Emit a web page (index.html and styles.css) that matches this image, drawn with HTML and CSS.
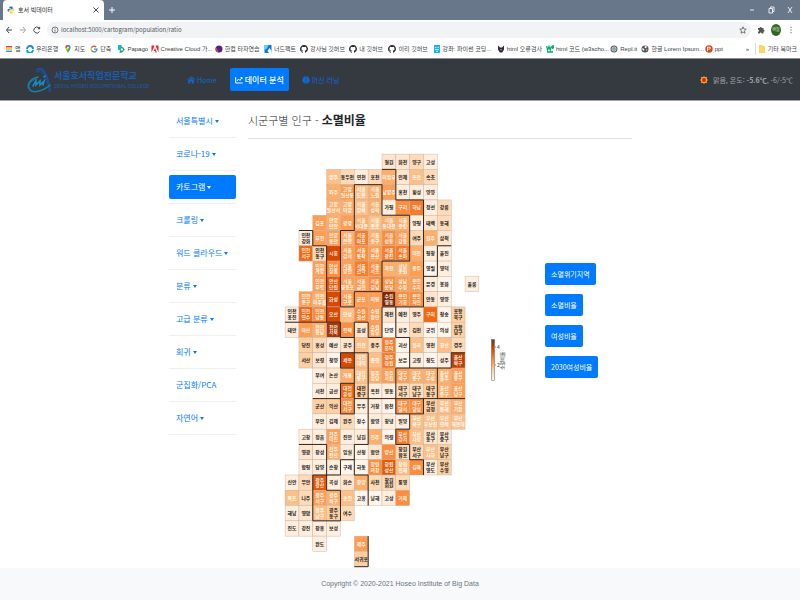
FILE: index.html
```html
<!DOCTYPE html>
<html lang="ko">
<head>
<meta charset="utf-8">
<title>호서 빅데이터</title>
<link rel="stylesheet" href="styles.css">
</head>
<body>
<svg class="defs" aria-hidden="true">
  <symbol id="github" viewBox="0 0 16 16"><path fill="#24292e" d="M8 0C3.6 0 0 3.6 0 8c0 3.5 2.3 6.5 5.5 7.6.4.1.5-.2.5-.4v-1.5c-2.2.5-2.7-.9-2.7-.9-.4-.9-.9-1.2-.9-1.2-.7-.5.1-.5.1-.5.8.1 1.200.8 1.200.8.7 1.200 1.900.9 2.300.7.1-.5.3-.9.5-1.100-1.800-.2-3.600-.9-3.600-4 0-.9.3-1.600.8-2.100-.1-.2-.4-1 .1-2.100 0 0 .7-.2 2.200.8a7.600 7.600 0 0 1 4 0c1.500-1 2.200-.8 2.200-.8.4 1.100.2 1.900.1 2.100.5.6.8 1.300.8 2.100 0 3.100-1.900 3.700-3.700 3.900.3.3.6.8.6 1.500v2.200c0 .2.1.5.6.4A8 8 0 0 0 8 0Z"/></symbol>
  <symbol id="python" viewBox="0 0 16 16"><path fill="#3776ab" d="M8 1c-3 0-3.500 1-3.500 2.500V5H8.500v1H3C1.500 6 1 7 1 8.500S2 11 3 11h1.500V9c0-1 1-2 2-2h3c1 0 2-1 2-2V3.500C11.500 2 11 1 8 1Z"/><path fill="#ffd43b" d="M8 15c3 0 3.500-1 3.500-2.500V11h-4v-1H13c1.500 0 2-1 2-2.500S14 5 13 5h-1v2c0 1-1 2-2 2H7c-1 0-2 1-2 2v1.500C5 14 5.500 15 8 15Z"/></symbol>
</svg>

<header class="browser">
  <div class="tabs">
    <div class="tab"><svg class="ico"><use href="#python"/></svg><span>호서 빅데이터</span><button class="plain close" aria-label="탭 닫기"><svg viewBox="0 0 8 8"><path d="M1.500 1.500l5 5m0-5l-5 5"/></svg></button></div>
    <button class="plain new" aria-label="새 탭"><svg viewBox="0 0 8 8"><path d="M4 1v6M1 4h6"/></svg></button>
    <div class="window">
      <button class="plain" aria-label="최소화"><svg viewBox="0 0 8 8"><path d="M2 4h4"/></svg></button>
      <button class="plain" aria-label="복원"><svg viewBox="0 0 8 8"><path d="M2 2.500h3.500v4.500H2zM3.500 2.500V1H7v4.500H5.500"/></svg></button>
      <button class="plain" aria-label="닫기"><svg viewBox="0 0 8 8"><path d="M2 1l4 6m0-6L2 7"/></svg></button>
    </div>
  </div>
  <div class="toolbar">
    <button class="plain" aria-label="뒤로"><svg viewBox="0 0 8 8"><path d="M7 4H1.500M4 1L1.500 4 4 7"/></svg></button>
    <button class="plain faded" aria-label="앞으로"><svg viewBox="0 0 8 8"><path d="M1 4h5.500M4 1l2.500 3L4 7"/></svg></button>
    <button class="plain" aria-label="새로고침"><svg viewBox="0 0 8 8"><path d="M6.500 5.500A3 3 0 1 1 6 2l.7.8M6.700.8v2H5"/></svg></button>
    <div class="omnibox">
      <svg class="line" viewBox="0 0 8 8"><circle cx="4" cy="4" r="3"/><path d="M4 3.500v2.200M4 2v.7"/></svg>
      <input aria-label="주소" value="localhost:5000/cartogram/population/ratio">
      <svg class="line" viewBox="0 0 8 8"><path d="M4 .8l.9 2.200 2.300.2-1.700 1.600.5 2.400L4 6 2 7.200l.5-2.400L.8 3.200l2.300-.2z"/></svg>
    </div>
    <button class="plain" aria-label="확장 프로그램"><svg viewBox="0 0 8 8"><path fill="#555" stroke="none" d="M1 2h1.700a1 1 0 0 1 2 0H6.500v1.800a1 1 0 0 1 0 2v1.700H4.700a1 1 0 0 0-2 0H1V5.700a1 1 0 0 0 0-2z"/></svg></button>
    <span class="avatar">하늘</span>
    <button class="plain" aria-label="메뉴"><svg viewBox="0 0 8 8"><path d="M4 .8v1M4 3.500v1M4 6.200v1"/></svg></button>
  </div>
  <nav class="bookmarks" aria-label="북마크">
    <a href="#"><svg class="ico" viewBox="0 0 8 8"><path fill="#ea4335" d="M1 1h6v1.500H1z"/><path fill="#fbbc05" d="M1 3.300h6v1.500H1z"/><path fill="#4285f4" d="M1 5.600h6V7H1z"/></svg>앱</a>
    <a href="#"><svg class="ico" viewBox="0 0 8 8"><path d="M1 4a3 3 0 0 1 6 0" fill="none" stroke="#1390d5" stroke-width="1.800"/><path d="M1 4.800a3 3 0 0 0 6 0" fill="none" stroke="#00a5d8" stroke-width="1.800"/></svg>우리은행</a>
    <a href="#"><svg class="ico" viewBox="0 0 8 8"><path fill="#34a853" d="M4 8C3.500 6 1.500 5 1.500 2.800A2.500 2.500 0 0 1 4 0a2.500 2.500 0 0 1 2.500 2.800C6.500 5 4.500 6 4 8Z"/><path fill="#4285f4" d="M4 0a2.500 2.500 0 0 1 2.400 2L4 4z"/><path fill="#fbbc05" d="M1.600 3.500L4 1.500V5L2.500 5.500z"/><path fill="#ea4335" d="M1.500 2.800A2.500 2.500 0 0 1 4 0v1.500z"/><circle cx="4" cy="2.700" r=".9" fill="#fff"/></svg>지도</a>
    <a href="#"><svg class="ico" viewBox="0 0 8 8" fill="none" stroke-width="1.300"><path stroke="#ea4335" d="M6.200 2A3 3 0 0 0 1.400 2.800"/><path stroke="#fbbc05" d="M1.400 2.700a3 3 0 0 0 0 2.600"/><path stroke="#34a853" d="M1.400 5.200A3 3 0 0 0 6 6.200"/><path stroke="#4285f4" d="M4 4.100h3a3 3 0 0 1-1 2.200"/></svg>단축</a>
    <a href="#"><svg class="ico" viewBox="0 0 8 8"><path fill="#18b4e8" d="M1 0h3.500l1 5H1z"/><path fill="#07a860" d="M3 3.500C4 1.500 7 2 7 4l1 .8-1.200.5C6.500 7 4.500 8 2.500 7.500z"/><circle cx="4.800" cy="4.500" r="1.200" fill="#fff"/></svg>Papago</a>
    <a href="#"><svg class="ico" viewBox="0 0 8 8"><path fill="#ed1c24" d="M.5.500h3L.5 7.500zM7.500.5h-3l3 7zM4 3l1.800 4.500H4.600L4 6H2.800z"/></svg>Creative Cloud 가...</a>
    <a href="#"><svg class="ico" viewBox="0 0 8 8"><circle cx="4" cy="4" r="3.500" fill="#4b2484"/><path fill="#ed3d27" d="M1 2.200A3.500 3.500 0 0 0 4 7.500C2.500 6 2.500 3.500 1 2.200z"/></svg>한컴 타자연습</a>
    <a href="#"><svg class="ico" viewBox="0 0 8 8"><path fill="#0879dd" d="M.5 0h7v8h-7z"/><path fill="#67d1fa" d="M.5 0h4L3 3.500.500 5z"/><path fill="#fff" d="M3.500 6l2-3 2 3v2H5z"/></svg>너드팩트</a>
    <a href="#"><svg class="ico"><use href="#github"/></svg>강사님 깃허브</a>
    <a href="#"><svg class="ico"><use href="#github"/></svg>내 깃허브</a>
    <a href="#"><svg class="ico"><use href="#github"/></svg>이리 깃허브</a>
    <a href="#"><svg class="ico" viewBox="0 0 8 8"><path fill="#16b6e9" d="M1 0h6v8H1z"/><path stroke="#fff" stroke-width=".7" fill="none" d="M2 2.500h1.500M4.500 2.500H6M2 4.500h4M3 6.300h2"/></svg>강좌: 파이썬 코딩...</a>
    <a href="#"><svg class="ico" viewBox="0 0 8 8"><path fill="#30283d" d="M1 .5l2 2h2l2-2v4L5.200 7.500H2.800L1 4.500z"/><path fill="#9c8cb5" d="M3 4l1 2 1-2z"/></svg>html 오류검사</a>
    <a href="#"><svg class="ico" viewBox="0 0 8 8"><path fill="none" stroke="#04aa6d" stroke-width="1.300" d="M.5 1l1.200 4L3 1.500 4.300 5 5.500 1M6 .8h1.500L6.700 2c1 0 1 1.500-.5 1.200M1 7h6"/></svg>html 코드 (w3scho...</a>
    <a href="#"><svg class="ico" viewBox="0 0 8 8"><circle cx="4" cy="4" r="3.500" fill="#56676e"/><circle cx="4" cy="4" r="2" fill="none" stroke="#fff" stroke-width=".7"/><circle cx="4" cy="4" r=".7" fill="#fff"/></svg>Repl.it</a>
    <a href="#"><svg class="ico" viewBox="0 0 8 8"><circle cx="4" cy="4" r="3.500" fill="#4f5357"/><path fill="#fff" d="M1.200 3l2 1v2L1.500 5zM4 1l2 .5-1 2L3.500 2.500zM5 4.500h1.500L5.500 6z"/></svg>한글 Lorem Ipsum...</a>
    <a href="#"><svg class="ico" viewBox="0 0 8 8"><circle cx="4" cy="4" r="3.700" fill="#d24726"/><path fill="#f7ded7" d="M2 1.800h2.300c2 0 2 2.700 0 2.700H3v1.700H2zM3 2.700v1h1.200c.7 0 .7-1 0-1z"/></svg>ppt</a>
    <span class="more">»</span>
    <a class="folder" href="#"><svg class="ico" viewBox="0 0 8 8"><path fill="#fdd663" d="M1 0h3l1 1h2v7H1z"/></svg>기타 북마크</a>
  </nav>
</header>

<nav class="navbar">
  <a class="brand" href="#">
    <svg viewBox="0 0 26 26"><g fill="none" stroke-linecap="round"><path stroke="#1c4f94" stroke-width="2.200" d="M10 3C16-2 21 9 23 24"/><path stroke="#1c4f94" d="M12 1.500C18 4 20 13 23 24M9 5c5-3 9 3 11 12"/><path stroke="#1581b5" stroke-width="1.500" d="M11 10C2 12-1 19 3 23c3 3 12 2 20-5"/><path stroke="#1c78ae" d="M9 12c-6 2-9 7-6 10"/><path stroke="#1a8cbc" stroke-width="1.600" d="M6 19l3-5v4l4-4v4l4-4-1 4M17 10l1-1"/></g></svg>
    <span><b>서울호서직업전문학교</b><small>SEOUL HOSEO OCCUPATIONAL COLLEGE</small></span>
  </a>
  <a class="link" href="#"><svg class="ico" viewBox="0 0 8 8"><path fill="currentColor" d="M4 .5l4 3.500-.6.600L4 1.700.6 4.600 0 4zM1.200 4.800L4 2.400l2.800 2.400v2.700H4.800V5.300H3.200v2.200h-2zM5.800 1H7v1.700L5.800 1.600z"/></svg>Home</a>
  <a class="link active" href="#"><svg class="ico" viewBox="0 0 8 8"><path fill="none" stroke="currentColor" d="M.7 1v6h7M2 5l1.500-2 1.500 1.500 2-3M5.500 1.500H7V3"/></svg>데이터 분석</a>
  <a class="link" href="#"><svg class="ico" viewBox="0 0 8 8"><path fill="currentColor" d="M3.800.3C2-.2 1.500 1 1.500 1.500.5 1.800.6 3 .8 3.200-.2 4 .2 5.300.8 5.600c0 1 .9 1.400 1.300 1.400.6 1 1.700.8 1.700.3zM4.200.3C6-.2 6.500 1 6.500 1.500c1 .3.9 1.500.7 1.700 1 .8.6 2.100 0 2.400 0 1-.9 1.400-1.300 1.400-.6 1-1.700.8-1.700.3z"/></svg>머신 러닝</a>
  <span class="weather"><svg class="ico" viewBox="0 0 8 8"><path fill="#ffb62e" d="M4 0l1 1.300L7 1l-.3 2L8 4 6.700 5 7 7l-2-.3L4 8 3 6.700 1 7l.3-2L0 4l1.300-1L1 1l2 .3z"/><circle cx="4" cy="4" r="2.200" fill="#f0280e"/></svg><span>맑음, 온도: <b>-5.6℃</b>, -6/-5℃</span></span>
</nav>

<div class="container">
  <aside>
    <ul class="side">
      <li><a class="drop" href="#">서울특별시</a></li>
      <li><a class="drop" href="#">코로나-19</a></li>
      <li><a class="drop current" href="#">카토그램</a></li>
      <li><a class="drop" href="#">크롤링</a></li>
      <li><a class="drop" href="#">워드 클라우드</a></li>
      <li><a class="drop" href="#">분류</a></li>
      <li><a class="drop" href="#">고급 분류</a></li>
      <li><a class="drop" href="#">회귀</a></li>
      <li><a href="#">군집화/PCA</a></li>
      <li><a class="drop" href="#">자연어</a></li>
    </ul>
  </aside>
  <main>
    <h1>시군구별 인구 - <strong>소멸비율</strong></h1>
    <div class="content">
      <svg id="map" class="map" viewBox="-20 -20 3540 7492" role="img" aria-label="시군구별 소멸비율"></svg>
      <svg class="legend" viewBox="0 0 16 42" role="img" aria-label="소멸비율 범례">
        <defs><linearGradient id="scale" x2="0" y2="1"><stop offset="0" stop-color="#7f2704"/><stop offset=".25" stop-color="#d94801"/><stop offset=".5" stop-color="#fd8d3c"/><stop offset=".75" stop-color="#fdd0a2"/><stop offset="1" stop-color="#fff5eb"/></linearGradient></defs>
        <rect x=".5" y=".5" width="3" height="41" fill="url(#scale)" stroke="#666" stroke-width=".5"/>
        <path d="M4 8h1M4 26h1" stroke="#333" stroke-width=".6"/>
        <text x="6" y="10">4</text><text x="6" y="28">2</text>
        <text transform="translate(13 31) rotate(-90)">소멸비율</text>
      </svg>
      <div class="actions">
        <button>소멸위기지역</button>
        <button>소멸비율</button>
        <button>여성비율</button>
        <button>2030여성비율</button>
      </div>
    </div>
  </main>
</div>
<footer>Copyright © 2020-2021 Hoseo Institute of Big Data</footer>
<script src="map.js"></script>
</body>
</html>
```
FILE: styles.css
```css
* { box-sizing: border-box; }
body {
  margin: 0;
  min-height: 100vh;
  display: flex;
  flex-direction: column;
  background: #fff;
  color: #212529;
  font-family: "Noto Sans CJK KR", "Noto Sans", sans-serif;
  font-size: 8px;
  line-height: 12px;
}
a { color: inherit; text-decoration: none; }
.defs { position: absolute; width: 0; height: 0; }
.ico { width: 8px; height: 8px; flex: none; }
.plain {
  width: 8px;
  height: 8px;
  padding: 0;
  border: 0;
  background: none;
  color: #44474b;
  flex: none;
}
.plain svg { display: block; width: 8px; height: 8px; fill: none; stroke: currentColor; }
.faded { color: #a5a8ac; }

.browser {
  border-bottom: 1px solid #8b8d90;
  font-family: "Liberation Sans", "Noto Sans CJK KR", sans-serif;
  font-size: 6px;
}
.tabs { display: flex; align-items: center; height: 20px; background: #69778b; }
.tab {
  display: flex;
  align-items: center;
  gap: 3px;
  width: 101px;
  height: 20px;
  margin-left: 3px;
  padding: 0 4px;
  background: #fff;
  border-radius: 4px 4px 0 0;
}
.close { margin-left: auto; }
.new { margin-left: 4px; color: #fff; }
.window { display: flex; gap: 11px; margin-left: auto; padding-right: 6px; }
.window .plain { color: #e8eaee; }
.toolbar { display: flex; align-items: center; gap: 6px; height: 20px; padding: 0 5px; }
.omnibox {
  flex: 1;
  display: flex;
  align-items: center;
  gap: 2px;
  height: 16px;
  padding: 0 4px;
  border-radius: 8px;
  background: #f1f3f4;
}
.omnibox input {
  flex: 1;
  min-width: 0;
  border: 0;
  padding: 0;
  background: none;
  color: #55595e;
  font: 6px/12px "Noto Sans CJK KR", sans-serif;
}
.line { width: 8px; height: 8px; fill: none; stroke: #55595e; stroke-width: 0.8; }
.avatar {
  width: 10px;
  height: 12px;
  border-radius: 50%;
  background: #33691e;
  color: #fff;
  font-size: 4px;
  text-align: center;
}
.bookmarks {
  display: grid;
  grid-template-columns: 21fr 38fr 26fr 27fr 33fr 64fr 49fr 36fr 49fr 39fr 44fr 64fr 49fr 64fr 31fr 63fr 41fr 9fr 45fr;
  align-items: center;
  height: 18px;
  padding-left: 5px;
  color: #3c4043;
  white-space: nowrap;
}
.bookmarks a { display: flex; align-items: center; gap: 2px; min-width: 0; }
.bookmarks .folder { border-left: 1px solid #d5d7da; padding-left: 2px; }

.navbar {
  display: flex;
  align-items: center;
  height: 42px;
  padding: 0 7px 0 27px;
  background: #343a40;
  border-bottom: 1px solid #a3a5a8;
  color: #0c69d6;
}
.brand { display: flex; align-items: center; gap: 1px; width: 113px; margin-right: 41px; color: #1c5cb0; }
.brand svg { width: 26px; height: 26px; flex: none; }
.brand b { display: block; font-size: 9px; line-height: 12px; white-space: nowrap; }
.brand small { display: block; font: 5px/8px "Liberation Sans Narrow", "Noto Sans CJK KR", sans-serif; white-space: nowrap; }
.link {
  display: flex;
  align-items: center;
  gap: 2px;
  height: 23px;
  padding: 0 6px;
  margin-right: 7px;
  border-radius: 2px;
  white-space: nowrap;
}
.link:not(.active) { font-size: 7px; }
.active { background: #007bff; color: #fff; font-weight: 500; padding: 0 5px; }
.weather { display: flex; align-items: center; gap: 5px; margin-left: auto; color: #a2a5a8; font-size: 7px; white-space: nowrap; }

.container {
  flex: 1;
  display: grid;
  grid-template-columns: 67px minmax(0, 1fr);
  gap: 12px;
  width: 58%;
  margin: 0 auto;
  padding-left: 1px;
}
.side { list-style: none; margin: 0; padding: 4px 0 0; }
.side li { padding: 4px 0; border-bottom: 1px solid #eeeff0; }
.side a { display: flex; align-items: center; height: 24px; padding: 0 7px; border-radius: 2px; color: #007bff; white-space: nowrap; }
.drop::after { content: ""; margin-left: 2px; border: 2px solid transparent; border-top: 3px solid; border-bottom: 0; }
.side .current { background: #007bff; color: #fff; }
h1 {
  margin: 0;
  height: 38px;
  padding-top: 9px;
  border-bottom: 1px solid #dcdddf;
  font-size: 11px;
  line-height: 20px;
  font-weight: 300;
}
h1 strong { font-size: 12px; font-weight: 700; }
.content { display: flex; align-items: flex-start; padding: 14px 0 0 36px; }
.map { width: 196px; flex: none; }
.map text { font-size: 88px; font-weight: 700; text-anchor: middle; fill: #222; }
.map .light { fill: #fff; font-weight: 500; }
.map rect { stroke: #c4b3a3; stroke-width: 8; }
.map polyline { fill: none; stroke: #33261f; stroke-width: 18; }
.legend { width: 16px; height: 42px; margin: 186px 0 0 11px; flex: none; }
.legend text { font-size: 5px; fill: #333; }
.actions { display: flex; flex-direction: column; align-items: flex-start; gap: 9px; margin: 110px 0 0 38px; }
.actions button {
  height: 22px;
  padding: 0 6px;
  border: 0;
  border-radius: 2px;
  background: #007bff;
  color: #fff;
  font: inherit;
  font-size: 7px;
  white-space: nowrap;
}
footer {
  padding: 10px;
  background: #f8f9fa;
  color: #6c757d;
  text-align: center;
  font-family: "Liberation Sans", sans-serif;
  font-size: 7px;
}
```
FILE: map.js
```js
// Each row: first column, then "name:level" cells; "_" leaves a column empty.
// Levels run from 0 (pale) to 16 (dark); a slash splits a name over two lines.
const rows = [
  "7 철원:2 화천:2 양구:3 고성:1",
  "3 양주:5 동두천:3 연천:1 포천:3 의정부:6 인제:2 춘천:5 속초:3",
  "3 파주:6 고양/일산동:7 서울/도봉:5 서울/노원:6 남양주:7 홍천:1 횡성:1 양양:1",
  "3 고양/일산서:6 고양/덕양:6 서울/강북:5 서울/성북:6 가평:1 구리:8 하남:9 정선:1 강릉:3",
  "2 김포:7 안양/만안:6 광명:7 서울/서대문:6 서울/종로:5 서울/동대문:6 서울/중랑:6 양평:1 태백:2 동해:3",
  "1 인천/강화:1 부천:7 안양/동안:7 서울/은평:6 서울/마포:9 서울/중구:6 서울/성동:8 서울/강동:7 여주:3 원주:6 삼척:2",
  "1 인천/서구:10 인천/동구:3 시흥:12 서울/강서:7 서울/동작:8 서울/용산:7 서울/광진:9 서울/송파:9 이천:6 평창:1 울진:1",
  "2 인천/계양:7 안산/상록:8 서울/양천:7 서울/관악:9 서울/서초:8 과천:6 성남/중원:6 광주:7 영월:0 영덕:1",
  "2 인천/부평:7 안산/단원:11 서울/영등포:7 서울/금천:7 서울/강남:8 성남/분당:8 성남/수정:7 용인/수지:7 문경:1 봉화:0 _ 울릉:1",
  "1 인천/중구:7 인천/미추홀:6 화성:12 서울/구로:7 군포:7 의왕:7 수원/영통:16 용인/기흥:8 용인/처인:8 안동:2 영양:1",
  "0 인천/옹진:1 인천/연수:10 인천/남동:8 오산:12 안성:5 수원/권선:8 수원/장안:7 제천:2 예천:1 영주:2 구미:10 청송:0 포항/북구:4",
  "0 태안:1 아산:7 천안/동남:6 천안/서북:14 평택:8 음성:2 수원/팔달:7 단양:0 상주:1 김천:3 군위:0 의성:0 포항/남구:4",
  "1 당진:4 홍성:3 예산:1 공주:2 진천:5 충주:3 청주/흥덕:9 괴산:0 칠곡:5 영천:1 경산:5 경주:3",
  "1 서산:4 보령:2 청양:0 세종:12 대전/대덕:5 증평:5 청주/청원:9 보은:0 고령:1 청도:0 성주:1 울산/북구:13",
  "2 부여:1 논산:2 계룡:6 대전/동구:5 청주/상당:6 청주/서원:7 대구/북구:7 대구/중구:6 대구/수성:6 울산/울주:6 울산/동구:7",
  "2 서천:1 금산:1 대전/유성:10 대전/중구:4 옥천:1 영동:1 대구/서구:3 대구/남구:3 대구/동구:4 울산/중구:6 울산/남구:7",
  "2 군산:4 익산:4 대전/서구:8 무주:1 거창:1 합천:0 대구/달서:8 대구/달성:8 부산/금정:4 부산/동래:5 부산/기장:6",
  "2 부안:1 김제:1 완주:3 장수:0 함양:1 창녕:1 밀양:1 부산/북구:5 부산/부산진:5 부산/연제:5 부산/해운대:5",
  "1 고창:1 정읍:1 전주/덕진:7 진안:1 남원:1 진주:6 의령:0 부산/강서:9 부산/사상:5 부산/동구:2 부산/중구:2",
  "1 영광:2 장성:1 전주/완산:6 임실:1 산청:0 함안:2 양산:8 창원/합포:3 부산/서구:3 부산/사하:5 부산/남구:4",
  "1 함평:1 담양:1 순창:1 구례:0 하동:0 창원/의창:8 창원/성산:11 창원/진해:5 김해:8 부산/영도:1 부산/수영:4",
  "0 신안:1 무안:3 광주/광산:11 곡성:1 화순:2 광양:6 사천:3 창원/회원:3 통영:3",
  "0 목포:5 나주:3 광주/서구:7 광주/북구:6 순천:5 고흥:0 남해:0 고성:1 거제:8",
  "0 해남:1 영암:2 광주/남구:5 광주/동구:4 여수:3",
  "0 진도:1 강진:1 장흥:1 보성:1",
  "2 완도:1 _ _ 제주:7",
  "5 서귀포:4"
];
const borders = [
  "1,5 2,5 2,6 3,6 3,11 0,11",
  "5,2 7,2 7,4 9,4 9,7 7,7 7,9 5,9 5,10 4,10 4,5 5,5 5,2",
  "7,1 8,1 8,3 10,3 10,10 7,10 7,12 6,12 6,11 5,11 5,12 4,12 4,11 3,11",
  "10,8 11,8 11,6 12,6",
  "8,10 8,12 9,12 9,14 8,14 8,17 10,17 10,16",
  "4,13 6,13 6,19 5,19 5,21 6,21 6,23",
  "5,12 5,15 4,15 4,17 5,17 5,15",
  "5,14 4,14 4,13",
  "2,16 4,16",
  "5,16 13,16",
  "9,14 11,14 11,16",
  "11,14 12,14 12,13 13,13",
  "9,17 9,18 8,18 8,19 9,19 9,20 10,20 10,21",
  "1,19 3,19 3,21 4,21 4,20 5,20",
  "2,21 3,21 3,22 4,22 4,24 2,24 2,21",
  "6,25 6,27 5,27"
];
const stops = [[255,245,235],[254,230,206],[253,208,162],[253,174,107],[253,141,60],[241,105,19],[217,72,1],[166,54,3],[127,39,4]];
const W = 250, H = 276;
const map = document.getElementById("map");

function add(tag, attrs, text) {
  const el = document.createElementNS("http://www.w3.org/2000/svg", tag);
  for (const key in attrs) el.setAttribute(key, attrs[key]);
  if (text) el.textContent = text;
  map.appendChild(el);
}
function shade(level) {
  const i = Math.floor(level / 2);
  const a = stops[i], b = stops[Math.min(i + level % 2, 8)];
  return "rgb(" + a.map((v, k) => Math.round((v + b[k]) / 2)).join() + ")";
}
rows.forEach((row, r) => {
  const [start, ...cells] = row.split(" ");
  cells.forEach((cell, k) => {
    if (cell === "_") return;
    const [name, value] = cell.split(":");
    const x = (Number(start) + k) * W, y = r * H, level = Number(value);
    add("rect", { x, y, width: W, height: H, fill: shade(level) });
    const lines = name.split("/");
    lines.forEach((line, n) => add("text", {
      x: x + W / 2,
      y: y + H / 2 + 32 + (lines.length === 2 ? n * 104 - 52 : 0),
      class: level > 4 ? "light" : "dark"
    }, line));
  });
});
borders.forEach(line => add("polyline", {
  points: line.split(" ").map(p => {
    const [x, y] = p.split(",");
    return x * W + "," + y * H;
  }).join(" ")
}));
```
